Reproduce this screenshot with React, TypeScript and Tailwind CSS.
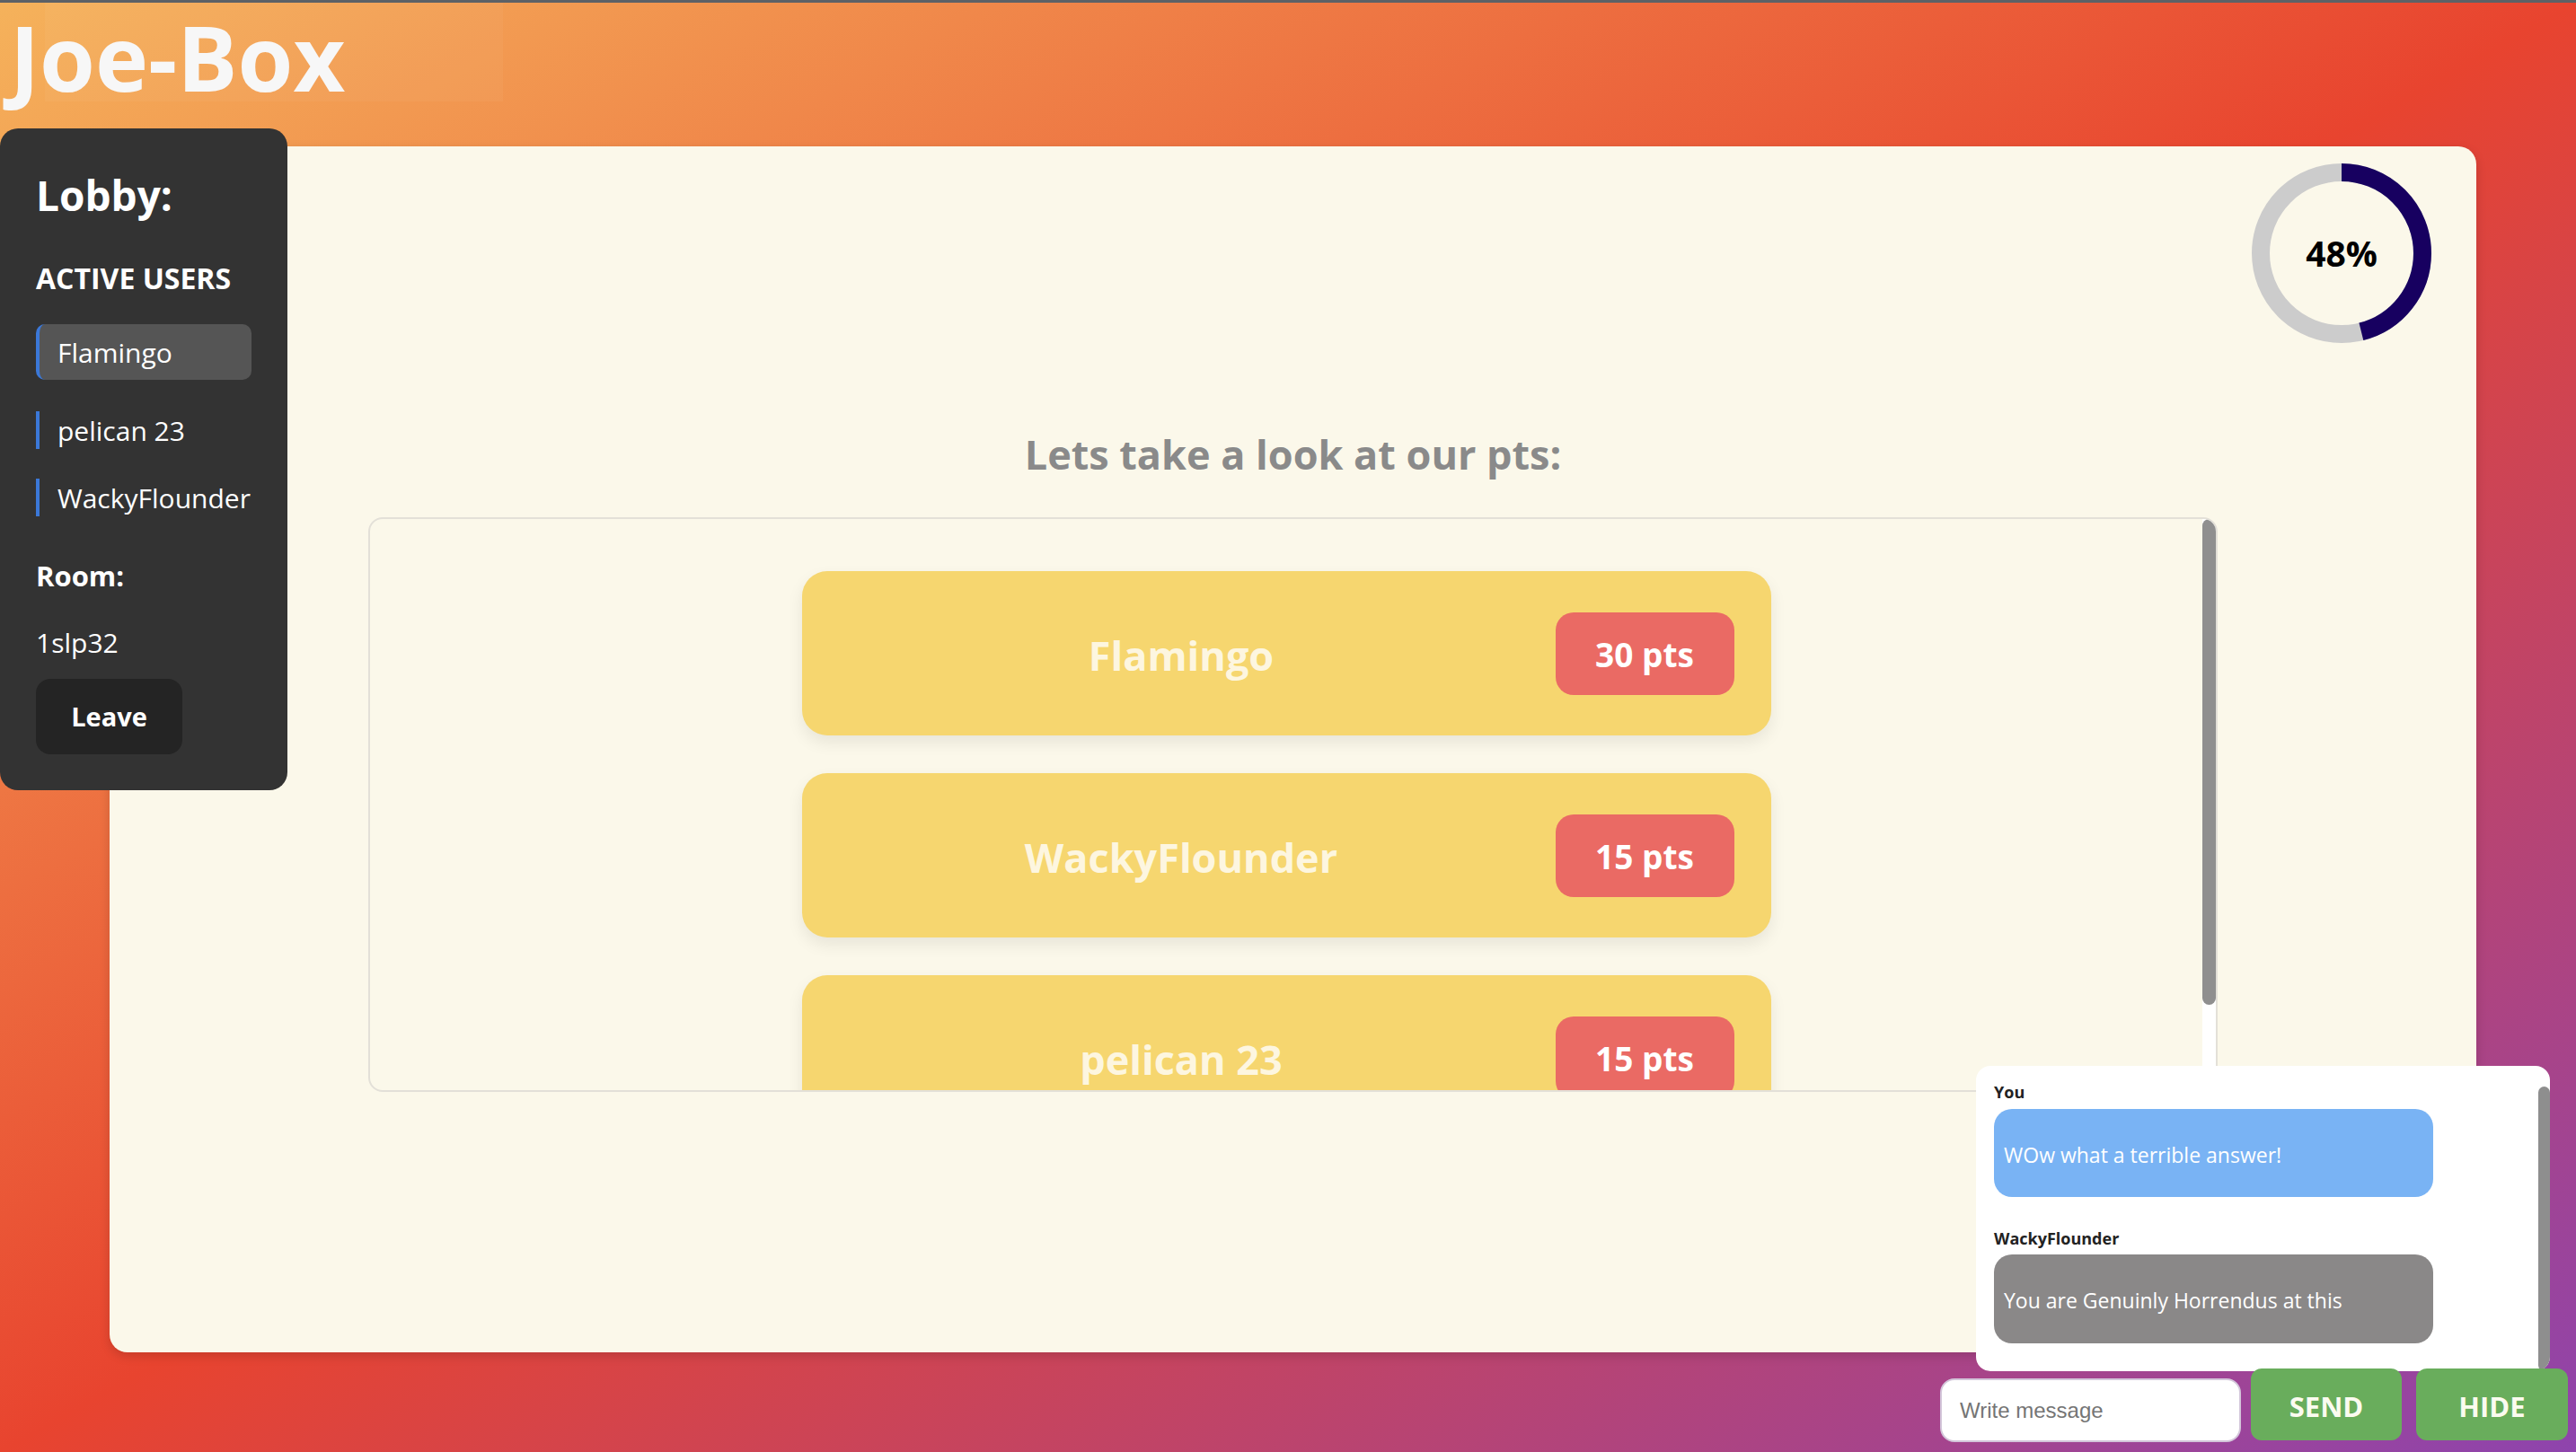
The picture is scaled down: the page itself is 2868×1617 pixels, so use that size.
import React from "react";

const C = 2 * Math.PI * 90;

function ProgressRing({ pct }: { pct: number }) {
  return (
    <div className="relative h-[200px] w-[200px]">
      <svg width="200" height="200" viewBox="0 0 200 200">
        <circle cx="100" cy="100" r="90" fill="none" stroke="#cccccc" strokeWidth="20" />
        <circle
          cx="100"
          cy="100"
          r="90"
          fill="none"
          stroke="#170060"
          strokeWidth="20"
          strokeDasharray={`${C * pct} ${C}`}
          transform="rotate(-90 100 100)"
        />
      </svg>
      <div className="absolute inset-0 flex items-center justify-center text-[39px] font-bold text-black">
        48%
      </div>
    </div>
  );
}

function ScoreCard({ name, pts }: { name: string; pts: string }) {
  return (
    <div className="flex h-[183px] w-[1079px] shrink-0 items-center rounded-[28px] bg-[#f6d66f] pr-[41px] shadow-[0_8px_18px_rgba(0,0,0,0.08)]">
      <div className="flex-1 pl-[6px] pt-[4px] text-center text-[45px] font-bold text-[#fdf6e0]">{name}</div>
      <div className="flex h-[92px] w-[199px] items-center justify-center rounded-[20px] bg-[#ea6a64] pt-[2px] text-[37px] font-bold text-white">
        {pts}
      </div>
    </div>
  );
}

export default function App() {
  return (
    <div className="relative h-[1617px] w-full overflow-hidden border-t-[3px] border-[#5d6166] bg-[linear-gradient(to_bottom_right,#f5b25b_0%,#e8442f_50%,#8e44ad_100%)] font-['Open_Sans',sans-serif]">
      <div className="pointer-events-none absolute left-[50px] top-0 h-[110px] w-[510px] bg-white/[0.04]" />
      <header className="h-[160px] pl-[11px]">
        <h1 className="text-[100px] font-bold leading-[120px] text-[#f7f7f7]">Joe-Box</h1>
      </header>

      <main className="ml-[122px] mr-[111px] flex h-[1343px] flex-col rounded-[20px] bg-[#fbf8ea] shadow-[0_4px_12px_rgba(0,0,0,0.15)]">
        <div className="flex justify-end pr-[50px] pt-[19px]">
          <ProgressRing pct={0.46} />
        </div>
        <h2 className="mt-[94px] text-center text-[45px] font-bold leading-[60px] text-[#8a8a8a]">
          Lets take a look at our pts:
        </h2>
        <div className="mx-[288px] mt-[40px] flex h-[640px] overflow-hidden rounded-[16px] border-2 border-[#e3e0d8]">
          <div className="flex flex-1 flex-col items-center gap-[42px] overflow-hidden pt-[58px]">
            <ScoreCard name="Flamingo" pts="30 pts" />
            <ScoreCard name="WackyFlounder" pts="15 pts" />
            <ScoreCard name="pelican 23" pts="15 pts" />
          </div>
          <div className="w-[15px] bg-white">
            <div className="h-[541px] rounded-full bg-[#8f8f8f]" />
          </div>
        </div>
      </main>

      <aside className="absolute left-0 top-[140px] h-[737px] w-[320px] rounded-[20px] bg-[#333333] px-[40px] pt-[46px] text-white">
        <div className="text-[46px] font-bold leading-[56px]">Lobby:</div>
        <div className="mt-[45px] text-[32px] font-bold leading-[40px]">ACTIVE USERS</div>
        <div className="mt-[31px] flex h-[62px] items-center rounded-[10px] border-l-4 border-[#3b78d8] bg-[#555555] pl-[20px] text-[30px]">
          Flamingo
        </div>
        <div className="mt-[35px] flex h-[42px] items-center border-l-4 border-[#3b78d8] pl-[20px] text-[30px]">
          pelican 23
        </div>
        <div className="mt-[33px] flex h-[42px] items-center border-l-4 border-[#3b78d8] pl-[20px] text-[30px]">
          WackyFlounder
        </div>
        <div className="mt-[46px] text-[31px] font-bold leading-[40px]">Room:</div>
        <div className="mt-[35px] text-[30px] leading-[40px]">1slp32</div>
        <button className="mt-[20px] flex h-[84px] w-[163px] items-center justify-center rounded-[16px] bg-[#242424] text-[29px] font-bold text-white">
          Leave
        </button>
      </aside>

      <div className="absolute bottom-[11px] right-[9px] flex flex-col items-end">
        <div className="mr-[20px] flex h-[340px] w-[639px] overflow-hidden rounded-[16px] bg-white">
          <div className="flex-1 pl-[20px] pt-[17px]">
            <div className="text-[18px] font-bold leading-[24px] text-[#222222]">You</div>
            <div className="mt-[7px] flex h-[98px] w-[489px] items-center rounded-[20px] bg-[#79b3f4] px-[11px] pt-[4px] text-[23px] text-white">
              WOw what a terrible answer!
            </div>
            <div className="mt-[34px] text-[18px] font-bold leading-[24px] text-[#222222]">WackyFlounder</div>
            <div className="mt-[6px] flex h-[99px] w-[489px] items-center rounded-[20px] bg-[#8a8888] px-[11px] pt-[4px] text-[23px] text-white">
              You are Genuinly Horrendus at this
            </div>
          </div>
          <div className="flex w-[13px] flex-col pt-[23px]">
            <div className="flex-1 rounded-full bg-[#8e8e8e]" />
          </div>
        </div>
        <div className="-mt-[3px] flex items-start">
          <input
            className="mt-[11px] h-[71px] w-[335px] rounded-[16px] border-2 border-[#d3c6da] bg-white pl-[20px] font-['Liberation_Sans',Arial,sans-serif] text-[24px] text-black outline-none placeholder:text-[#757575]"
            placeholder="Write message"
          />
          <button className="ml-[11px] flex h-[80px] w-[168px] items-center justify-center rounded-[12px] bg-[#69ad5c] pt-[4px] text-[31px] font-bold text-[#fbfbf0]">
            SEND
          </button>
          <button className="ml-[16px] flex h-[80px] w-[169px] items-center justify-center rounded-[12px] bg-[#69ad5c] pt-[4px] text-[31px] font-bold text-[#fbfbf0]">
            HIDE
          </button>
        </div>
      </div>
    </div>
  );
}
